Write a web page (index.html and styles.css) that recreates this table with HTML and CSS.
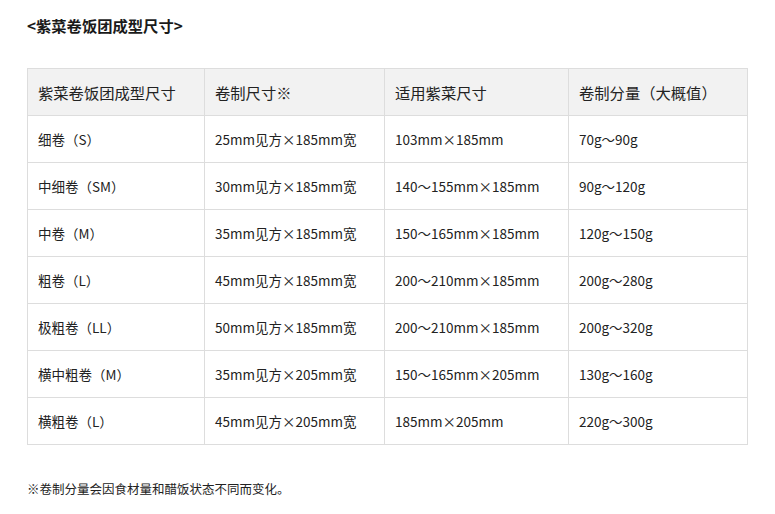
FILE: index.html
```html
<!DOCTYPE html>
<html lang="zh-CN">
<head>
<meta charset="utf-8">
<link rel="stylesheet" href="styles.css">
</head>
<body>
<div class="page">
  <h2 class="title">&lt;紫菜卷饭团成型尺寸&gt;</h2>
  <table class="size-table">
    <colgroup>
      <col class="c1"><col class="c2"><col class="c3"><col class="c4">
    </colgroup>
    <thead>
      <tr><th>紫菜卷饭团成型尺寸</th><th>卷制尺寸※</th><th>适用紫菜尺寸</th><th>卷制分量（大概值）</th></tr>
    </thead>
    <tbody>
      <tr><td>细卷（S）</td><td>25mm见方×185mm宽</td><td>103mm×185mm</td><td>70g～90g</td></tr>
      <tr><td>中细卷（SM）</td><td>30mm见方×185mm宽</td><td>140～155mm×185mm</td><td>90g～120g</td></tr>
      <tr><td>中卷（M）</td><td>35mm见方×185mm宽</td><td>150～165mm×185mm</td><td>120g～150g</td></tr>
      <tr><td>粗卷（L）</td><td>45mm见方×185mm宽</td><td>200～210mm×185mm</td><td>200g～280g</td></tr>
      <tr><td>极粗卷（LL）</td><td>50mm见方×185mm宽</td><td>200～210mm×185mm</td><td>200g～320g</td></tr>
      <tr><td>横中粗卷（M）</td><td>35mm见方×205mm宽</td><td>150～165mm×205mm</td><td>130g～160g</td></tr>
      <tr><td>横粗卷（L）</td><td>45mm见方×205mm宽</td><td>185mm×205mm</td><td>220g～300g</td></tr>
    </tbody>
  </table>
  <p class="note">※卷制分量会因食材量和醋饭状态不同而变化。</p>
</div>
</body>
</html>
```

FILE: styles.css
```css
html, body {
  margin: 0;
  padding: 0;
  background: #fff;
}
body {
  font-family: "Noto Sans CJK SC", "Noto Sans", sans-serif;
  color: #222;
}
.page {
  padding: 14px 27px 0 27px;
}
.title {
  margin: 0;
  font-size: 15.3px;
  font-weight: bold;
  line-height: 22px;
  color: #1a1a1a;
}
.size-table {
  margin-top: 32px;
  width: 720px;
  border-collapse: collapse;
  table-layout: fixed;
}
.c1 { width: 177px; }
.c2 { width: 180px; }
.c3 { width: 184px; }
.c4 { width: 179px; }
.size-table th,
.size-table td {
  border: 1px solid #ddd;
  height: 47px;
  padding: 0 10px;
  text-align: left;
  vertical-align: middle;
  box-sizing: border-box;
}
.size-table th {
  background: #f2f2f2;
  font-size: 15.3px;
  font-weight: normal;
  color: #222;
}
.size-table td {
  font-size: 13.5px;
  color: #222;
}
.note {
  margin: 34px 0 0 0;
  font-size: 12.5px;
  line-height: 20px;
  color: #222;
}
```
